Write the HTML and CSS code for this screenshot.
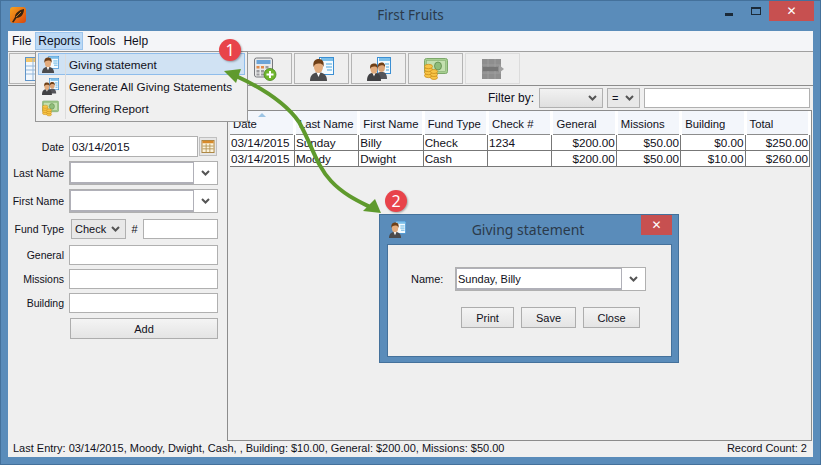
FILE: index.html
```html
<!DOCTYPE html>
<html lang="en">
<head>
    <meta charset="UTF-8">
    <meta name="viewport" content="width=device-width, initial-scale=1.0">
    <title>First Fruits</title>
    <link rel="stylesheet" href="styles.css">
</head>
<body>
    <svg class="defs" width="0" height="0">
        <defs>
            <linearGradient id="orange" x1="0" y1="0" x2="1" y2="1">
                <stop offset="0" stop-color="#f7a21c"/>
                <stop offset="1" stop-color="#d9480f"/>
            </linearGradient>
            <symbol id="i-app" viewBox="0 0 16 16">
                <rect width="16" height="16" rx="3" fill="url(#orange)"/>
                <path d="M2 15 L5 10 C5 6 9 3 14 2 C14 7 11 11 6.5 11 L3.5 15.5 Z" fill="#3a2410"/>
                <path d="M6 10 L11 5" stroke="#c9761c" stroke-width="1"/>
            </symbol>
            <symbol id="i-card" viewBox="0 0 24 24">
                <rect x="9.5" y="0.5" width="14" height="17" fill="#f4fbff" stroke="#3b8fd3"/>
                <path d="M11 1h12v3h-12z" fill="#7cc0ea"/>
                <path d="M16 7h6M16 10h6M17 13h5" stroke="#4aa6dc" stroke-width="1.2"/>
                <path d="M0 24 C0 18 3 16.5 6 15.5 H11 C14 16.5 17 18 17 24 Z" fill="#4b4b4d"/>
                <path d="M6.5 15.5 L8.5 20 L10.5 15.5 Z" fill="#fff"/>
                <ellipse cx="8.5" cy="10" rx="4.5" ry="6" fill="#e3ac7d"/>
                <path d="M3.5 10 C2.5 3.5 6 2 9 2 C12.5 2 14.5 5 13.5 10 C13 7 11 6.5 8.5 6.5 C6 6.5 4.5 7.5 3.5 10 Z" fill="#6e3f17"/>
            </symbol>
            <symbol id="i-cards" viewBox="0 0 24 24">
                <rect x="10.5" y="0.5" width="13" height="16" fill="#f4fbff" stroke="#3b8fd3"/>
                <path d="M12 1h11v3h-11z" fill="#7cc0ea"/>
                <path d="M18 7h4M19 10h3M19 13h3" stroke="#4aa6dc" stroke-width="1.2"/>
                <path d="M9 22 C9 17 11 15.5 13 15 H16 C18 15.5 20 17 20 22 Z" fill="#55555a"/>
                <ellipse cx="14.5" cy="10.5" rx="3.4" ry="4.5" fill="#dca477"/>
                <path d="M11 10.5 C10.5 6 13 5.5 14.8 5.5 C17 5.5 18.5 7.5 18 10.5 C17.5 8.5 16 8.3 14.5 8.3 C13 8.3 12 9 11 10.5 Z" fill="#6e3f17"/>
                <path d="M0 24 C0 18.5 2 16.5 5 16 H9 C12 16.5 14 18.5 14 24 Z" fill="#414144"/>
                <path d="M5.5 16 L7 19.5 L8.5 16 Z" fill="#fff"/>
                <ellipse cx="7" cy="12" rx="3.6" ry="4.8" fill="#e3ac7d"/>
                <path d="M3.2 12 C2.6 7 5 6.5 7.3 6.5 C9.7 6.5 11.2 8.5 10.7 12 C10.2 10 9 9.6 7 9.6 C5.3 9.6 4 10.3 3.2 12 Z" fill="#6e3f17"/>
            </symbol>
            <symbol id="i-money" viewBox="0 0 24 22">
                <rect x="0.5" y="0.5" width="23" height="15" rx="2" fill="#a6cf90" stroke="#7da86b"/>
                <rect x="2.5" y="2.5" width="19" height="11" fill="#c4e0b0" stroke="#86ae72" stroke-width=".6"/>
                <ellipse cx="14" cy="8" rx="3.5" ry="4" fill="#8fbd7a" stroke="#5e8a4c" stroke-width=".8"/>
                <g fill="#f7c445" stroke="#c98a17" stroke-width=".7">
                    <ellipse cx="4.5" cy="17.5" rx="4" ry="2.2"/>
                    <ellipse cx="4.5" cy="14.5" rx="4" ry="2.2"/>
                    <ellipse cx="4.5" cy="11.5" rx="4" ry="2.2"/>
                    <ellipse cx="4.5" cy="8.5" rx="4" ry="2.2"/>
                    <ellipse cx="10" cy="19.5" rx="3.5" ry="2"/>
                    <ellipse cx="10" cy="16.5" rx="3.5" ry="2"/>
                    <ellipse cx="10" cy="13.5" rx="3.5" ry="2"/>
                </g>
            </symbol>
            <symbol id="i-calc" viewBox="0 0 23 24">
                <rect x="1" y="1" width="18" height="19" rx="2" fill="#e9e9e9" stroke="#77787c"/>
                <rect x="3" y="3" width="14" height="4" fill="#6ba4d8"/>
                <g fill="#e08a4a">
                    <rect x="3" y="9" width="3" height="2.5"/><rect x="7.5" y="9" width="3" height="2.5"/>
                </g>
                <g fill="#9a9a9e">
                    <rect x="12" y="9" width="3" height="2.5"/>
                    <rect x="3" y="13" width="3" height="2.5"/><rect x="7.5" y="13" width="3" height="2.5"/>
                    <rect x="3" y="16.5" width="3" height="2"/><rect x="7.5" y="16.5" width="3" height="2"/>
                </g>
                <circle cx="16.5" cy="17.5" r="6" fill="#6fb52c" stroke="#44851a" stroke-width=".8"/>
                <path d="M16.5 14v7M13 17.5h7" stroke="#fff" stroke-width="2"/>
            </symbol>
            <symbol id="i-table" viewBox="0 0 24 24">
                <rect x=".5" y=".5" width="23" height="23" fill="#f3f8fd" stroke="#5f94c8"/>
                <rect x="1" y="1" width="22" height="4" fill="#f5c76a"/>
                <path d="M1 9h22M1 13h22M1 17h22M8 1v22M16 1v22" stroke="#93b7da" stroke-width="1"/>
            </symbol>
            <symbol id="i-locked" viewBox="0 0 24 20">
                <rect x="1" y="0" width="19" height="20" fill="#8e8e8e"/>
                <path d="M1 6h19M1 14h19M7 0v20M14 0v20" stroke="#a2a2a2" stroke-width=".8"/>
                <rect x="2" y="8" width="15" height="4" fill="#767676"/>
                <path d="M18 6 L23 10 L18 14 Z" fill="#a0a0a0"/>
            </symbol>
            <symbol id="i-cal" viewBox="0 0 14 14">
                <rect x=".5" y=".5" width="13" height="13" fill="#fbf3dc" stroke="#a9803a"/>
                <rect x="1" y="1" width="12" height="2.5" fill="#d88a2a"/>
                <path d="M1 6.5h12M1 9.5h12M5 4v9M9 4v9" stroke="#b8985a" stroke-width="1"/>
            </symbol>
            <symbol id="i-down" viewBox="0 0 9 6">
                <path d="M1 1 L4.5 4.5 L8 1" fill="none" stroke="#555" stroke-width="2"/>
            </symbol>
        </defs>
    </svg>

    <div class="window">
        <div class="titlebar">
            <div class="titlebar-left"><svg class="app-icon"><use href="#i-app"/></svg></div>
            <div class="title">First Fruits</div>
            <div class="controls">
                <span class="ctl-min"></span>
                <span class="ctl-max"></span>
                <span class="ctl-close">&#x2715;</span>
            </div>
        </div>

        <div class="client">
            <div class="menubar">
                <span class="menu-item">File</span>
                <span class="menu-item active">Reports</span>
                <span class="menu-item">Tools</span>
                <span class="menu-item">Help</span>
            </div>

            <div class="toolbar">
                <button class="tool" type="button"><svg class="ico-lg"><use href="#i-table"/></svg></button>
                <button class="tool" type="button"></button>
                <button class="tool" type="button"></button>
                <button class="tool" type="button"></button>
                <button class="tool" type="button"><svg class="ico-lg"><use href="#i-calc"/></svg></button>
                <button class="tool" type="button"><svg class="ico-lg"><use href="#i-card"/></svg></button>
                <button class="tool" type="button"><svg class="ico-lg"><use href="#i-cards"/></svg></button>
                <button class="tool" type="button"><svg class="ico-lg"><use href="#i-money"/></svg></button>
                <button class="tool disabled" type="button"><svg class="ico-lg"><use href="#i-locked"/></svg></button>
            </div>

            <div class="main">
                <div class="side">
                    <div class="row">
                        <label class="lbl">Date</label>
                        <input class="field date" type="text" value="03/14/2015">
                        <span class="cal-btn"><svg class="ico-cal"><use href="#i-cal"/></svg></span>
                    </div>
                    <div class="row">
                        <label class="lbl">Last Name</label>
                        <div class="combo">
                            <input class="combo-text" type="text">
                            <span class="combo-btn"><svg class="chev"><use href="#i-down"/></svg></span>
                        </div>
                    </div>
                    <div class="row">
                        <label class="lbl">First Name</label>
                        <div class="combo">
                            <input class="combo-text" type="text">
                            <span class="combo-btn"><svg class="chev"><use href="#i-down"/></svg></span>
                        </div>
                    </div>
                    <div class="row row-fund">
                        <label class="lbl">Fund Type</label>
                        <div class="select fund">Check<svg class="chev"><use href="#i-down"/></svg></div>
                        <span class="hash">#</span>
                        <input class="field check-no" type="text">
                    </div>
                    <div class="row row-amount">
                        <label class="lbl">General</label>
                        <input class="field" type="text">
                    </div>
                    <div class="row">
                        <label class="lbl">Missions</label>
                        <input class="field" type="text">
                    </div>
                    <div class="row">
                        <label class="lbl">Building</label>
                        <input class="field" type="text">
                    </div>
                    <button class="btn add" type="button">Add</button>
                </div>

                <div class="content">
                    <div class="filter">
                        <span class="filter-lbl">Filter by:</span>
                        <div class="select filter-col"><svg class="chev"><use href="#i-down"/></svg></div>
                        <div class="select filter-op">=<svg class="chev"><use href="#i-down"/></svg></div>
                        <input class="field filter-text" type="text">
                    </div>
                    <div class="grid-wrap">
                        <table class="grid">
                            <thead>
                                <tr>
                                    <th class="sorted">Date</th>
                                    <th>Last Name</th>
                                    <th>First Name</th>
                                    <th>Fund Type</th>
                                    <th>Check #</th>
                                    <th>General</th>
                                    <th>Missions</th>
                                    <th>Building</th>
                                    <th>Total</th>
                                </tr>
                            </thead>
                            <tbody>
                                <tr>
                                    <td>03/14/2015</td><td>Sunday</td><td>Billy</td><td>Check</td><td>1234</td>
                                    <td class="num">$200.00</td><td class="num">$50.00</td><td class="num">$0.00</td><td class="num">$250.00</td>
                                </tr>
                                <tr>
                                    <td>03/14/2015</td><td>Moody</td><td>Dwight</td><td>Cash</td><td></td>
                                    <td class="num">$200.00</td><td class="num">$50.00</td><td class="num">$10.00</td><td class="num">$260.00</td>
                                </tr>
                            </tbody>
                        </table>
                    </div>
                </div>
            </div>

            <div class="statusbar">
                <span>Last Entry: 03/14/2015, Moody, Dwight, Cash, , Building: $10.00, General: $200.00, Missions: $50.00</span>
                <span>Record Count: 2</span>
            </div>
        </div>
    </div>

    <!-- open menu -->
    <div class="dropdown">
        <div class="drop-item hover"><svg class="ico-sm"><use href="#i-card"/></svg><span>Giving statement</span></div>
        <div class="drop-item"><svg class="ico-sm"><use href="#i-cards"/></svg><span>Generate All Giving Statements</span></div>
        <div class="drop-item"><svg class="ico-sm"><use href="#i-money"/></svg><span>Offering Report</span></div>
    </div>

    <!-- dialog -->
    <div class="dialog">
        <div class="dialog-bar">
            <svg class="ico-sm"><use href="#i-card"/></svg>
            <div class="dialog-title">Giving statement</div>
            <span class="ctl-close small">&#x2715;</span>
        </div>
        <div class="dialog-body">
            <div class="dialog-row">
                <label class="dialog-lbl">Name:</label>
                <div class="combo dialog-combo">
                    <input class="combo-text" type="text" value="Sunday, Billy">
                    <span class="combo-btn"><svg class="chev"><use href="#i-down"/></svg></span>
                </div>
            </div>
            <div class="dialog-btns">
                <button class="btn w-print" type="button">Print</button>
                <button class="btn w-save" type="button">Save</button>
                <button class="btn w-close" type="button">Close</button>
            </div>
        </div>
    </div>

    <!-- callouts -->
    <svg class="arrow" width="821" height="465" viewBox="0 0 821 465">
        <path d="M236 76 C262 88 285 102 299 122 C312 145 316 165 331 181 C343 194 358 201 370 207" fill="none" stroke="#5f9a2d" stroke-width="4"/>
        <path d="M224 71 L241 69 L236 83 Z" fill="#5f9a2d"/>
        <path d="M381 213 L375 199 L363 211 Z" fill="#5f9a2d"/>
    </svg>
    <span class="badge badge-1">1</span>
    <span class="badge badge-2">2</span>
</body>
</html>
```

FILE: styles.css
```css
* {
    box-sizing: border-box;
}

body {
    margin: 0;
    width: 821px;
    height: 465px;
    position: relative;
    overflow: hidden;
    font-family: "Liberation Sans", Arial, sans-serif;
    font-size: 11px;
    color: #101020;
}

.defs {
    position: absolute;
}

input {
    font-family: inherit;
    font-size: 11px;
    color: #101020;
}

.window {
    height: 465px;
    display: flex;
    flex-direction: column;
    background-color: #5a8cba;
    border: 1px solid #44719b;
}

/* title bar */
.titlebar {
    height: 30px;
    display: grid;
    grid-template-columns: 1fr auto 1fr;
}

.titlebar-left {
    padding: 6px 0 0 9px;
}

.app-icon {
    width: 16px;
    height: 16px;
    display: block;
}

.title {
    font-family: "Noto Sans", sans-serif;
    font-size: 13.5px;
    line-height: 29px;
    color: #2b3a4a;
}

.controls {
    display: flex;
    justify-content: flex-end;
    align-items: flex-start;
    padding-right: 6px;
}

.ctl-min {
    width: 8px;
    height: 3px;
    margin: 12px 18px 0 0;
    background-color: #1b2a38;
}

.ctl-max {
    width: 10px;
    height: 8px;
    margin: 6px 8px 0 0;
    border: 1px solid #1b2a38;
    border-top-width: 2px;
}

.ctl-close {
    width: 45px;
    height: 20px;
    background-color: #c75050;
    color: #fff;
    font-family: "DejaVu Sans", sans-serif;
    font-size: 12px;
    font-weight: bold;
    line-height: 20px;
    text-align: center;
}

.ctl-close.small {
    width: 31px;
    margin-top: 0;
}

/* client area */
.client {
    flex: 1;
    margin: 0 7px 7px 7px;
    display: flex;
    flex-direction: column;
    background-color: #efefef;
}

.menubar {
    height: 21px;
    padding: 1px 0 1px 0;
    display: flex;
    font-size: 12px;
    background-color: #f4f5f8;
    border-bottom: 1px solid #a0a0a0;
}

.menu-item {
    padding: 0 3px;
    line-height: 17px;
    border: 1px solid transparent;
}

.menu-item.active {
    padding: 0 2px;
    background-color: #bcd9f6;
    border-color: #9cc4ec;
}

.toolbar {
    height: 34px;
    padding: 1px 0 0 1px;
    display: flex;
    gap: 2px;
    border-bottom: 1px solid #8c8c8c;
}

.tool {
    width: 55px;
    height: 31px;
    padding: 0;
    display: flex;
    align-items: center;
    justify-content: center;
    background-color: #efefef;
    border: 1px solid #b4b4b4;
}

.tool.disabled {
    border-color: #dcdcdc;
}

.ico-lg {
    width: 24px;
    height: 24px;
}

.ico-sm {
    width: 17px;
    height: 17px;
    flex: none;
}

.main {
    flex: 1;
    display: flex;
}

/* entry form */
.side {
    width: 220px;
    padding-top: 50px;
    display: flex;
    flex-direction: column;
    gap: 4px;
    border-right: 1px solid #8c8c8c;
}

.row {
    display: flex;
    align-items: center;
}

.row-fund {
    margin-top: 2px;
    height: 20px;
}

.row-amount {
    margin-top: 2px;
}

.lbl {
    width: 56px;
    margin-right: 5px;
    font-size: 10.5px;
    text-align: right;
    white-space: nowrap;
}

.field {
    width: 149px;
    height: 20px;
    padding: 0 2px;
    background-color: #fff;
    border: 1px solid #b0b0b0;
    border-radius: 0;
    outline: none;
}

.field.date {
    width: 129px;
    height: 21px;
    font-size: 11.5px;
}

.cal-btn {
    width: 18px;
    height: 19px;
    margin-left: 1px;
    display: flex;
    align-items: center;
    justify-content: center;
    background-color: #e6e6e6;
    border: 1px solid #c0c0c0;
}

.ico-cal {
    width: 14px;
    height: 13px;
}

.combo {
    width: 149px;
    height: 24px;
    display: flex;
    background-color: #fff;
    border: 1px solid #b0b0b0;
}

.combo-text {
    flex: 1;
    min-width: 0;
    padding: 0 1px;
    border: 2px solid #b0b0b8;
    border-width: 1px 1px 2px 1px;
    outline: none;
}

.combo-btn {
    width: 23px;
    display: flex;
    align-items: center;
    justify-content: center;
}

.chev {
    width: 9px;
    height: 6px;
    flex: none;
}

.select {
    height: 20px;
    padding: 0 5px 0 3px;
    display: flex;
    align-items: center;
    justify-content: space-between;
    background-color: #e8e8e8;
    border: 1px solid #b0b0b0;
}

.select.fund {
    width: 55px;
    margin-left: 2px;
}

.hash {
    width: 17px;
    text-align: center;
}

.field.check-no {
    width: 75px;
}

.btn {
    height: 21px;
    padding: 0;
    font-family: inherit;
    font-size: 11px;
    color: #101020;
    background: linear-gradient(#f4f4f4, #e4e4e4);
    border: 1px solid #adadad;
}

.btn.add {
    width: 148px;
    margin: 1px 0 0 62px;
}

/* right side */
.content {
    flex: 1;
    display: flex;
    flex-direction: column;
}

.filter {
    height: 24px;
    padding: 2px 3px 0 0;
    display: flex;
    justify-content: flex-end;
    gap: 4px;
}

.filter-lbl {
    line-height: 20px;
    margin-right: 1px;
    font-size: 12px;
}

.select.filter-col {
    width: 64px;
    justify-content: flex-end;
    background: linear-gradient(#f2f2f2, #dfdfdf);
}

.select.filter-op {
    width: 33px;
    padding-left: 4px;
}

.field.filter-text {
    width: 166px;
}

.grid-wrap {
    flex: 1;
    border: 1px solid #8c8c8c;
    border-left: none;
    margin-right: 1px;
}

.grid {
    width: 581px;
    margin-left: 2px;
    table-layout: fixed;
    border-collapse: collapse;
    font-size: 11.7px;
}

.grid th {
    height: 23px;
    padding: 4px 0 0 3px;
    font-size: 11.3px;
    font-weight: normal;
    text-align: left;
    white-space: nowrap;
    background-color: #f3f6fb;
    border-right: 3px solid #fff;
    border-bottom: 1px solid #8c8c8c;
}

.grid th.sorted {
    position: relative;
}

.grid th.sorted::after {
    content: "";
    position: absolute;
    left: 28px;
    top: 2px;
    border: 4px solid transparent;
    border-top: none;
    border-bottom: 4px solid #9cc4e4;
}

.grid td {
    height: 16px;
    padding: 0 1px;
    line-height: 15px;
    background-color: #fff;
    border-right: 1px solid #777;
    border-bottom: 1px solid #777;
    white-space: nowrap;
    overflow: hidden;
}

.grid td.num {
    text-align: right;
}

.statusbar {
    height: 16px;
    padding: 0 6px 0 5px;
    display: flex;
    justify-content: space-between;
    line-height: 15px;
    background-color: #f0f0f0;
}

/* menu popup */
.dropdown {
    position: absolute;
    left: 35px;
    top: 51px;
    width: 213px;
    height: 71px;
    padding: 1px 2px 0 2px;
    font-size: 11.7px;
    background-color: #f0f0f0;
    border: 1px solid #979797;
}

.dropdown::before {
    content: "";
    position: absolute;
    left: 29px;
    top: 2px;
    bottom: 2px;
    width: 1px;
    background-color: #dcdcdc;
}

.drop-item {
    height: 22px;
    padding-left: 3px;
    display: flex;
    align-items: center;
    gap: 10px;
    border: 1px solid transparent;
}

.drop-item.hover {
    background-color: #d0e2f3;
    border-color: #8fbdeb;
}

/* dialog */
.dialog {
    position: absolute;
    left: 379px;
    top: 214px;
    width: 300px;
    height: 149px;
    display: flex;
    flex-direction: column;
    background-color: #5a8cba;
    border: 1px solid #44719b;
    padding: 0 6px 5px 7px;
}

.dialog-bar {
    height: 29px;
    display: flex;
    align-items: flex-start;
}

.dialog-bar .ico-sm {
    margin: 6px 0 0 2px;
}

.dialog-title {
    flex: 1;
    font-family: "Noto Sans", sans-serif;
    font-size: 14px;
    line-height: 29px;
    text-align: center;
    color: #2b3a4a;
    padding-left: 9px;
}

.dialog-body {
    flex: 1;
    padding-top: 22px;
    background-color: #efefef;
    border: 1px solid #44719b;
}

.dialog-row {
    display: flex;
    align-items: center;
    padding-left: 23px;
}

.dialog-lbl {
    width: 44px;
}

.combo.dialog-combo {
    width: 191px;
}

.dialog-btns {
    margin-top: 16px;
    padding-left: 73px;
    display: flex;
    gap: 7px;
}

.w-print {
    width: 53px;
}

.w-save {
    width: 55px;
}

.w-close {
    width: 57px;
}

/* callouts */
.arrow {
    position: absolute;
    left: 0;
    top: 0;
    pointer-events: none;
}

.badge {
    position: absolute;
    width: 22px;
    height: 22px;
    border-radius: 50%;
    background-color: #e8434a;
    color: #fff;
    font-family: "Noto Sans", sans-serif;
    font-size: 16px;
    line-height: 22px;
    text-align: center;
    box-shadow: 1px 1px 2px rgba(0, 0, 0, 0.3);
}

.badge-1 {
    left: 219px;
    top: 39px;
}

.badge-2 {
    left: 385px;
    top: 190px;
}
```
